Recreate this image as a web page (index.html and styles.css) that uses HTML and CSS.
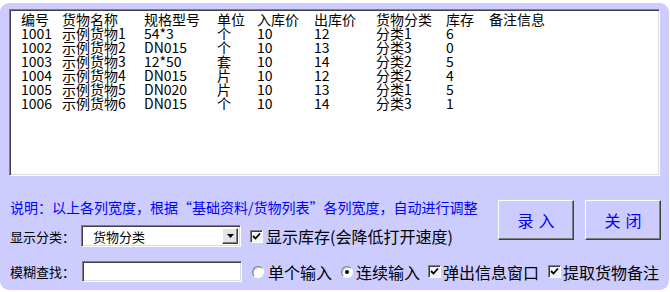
FILE: index.html
```html
<!DOCTYPE html>
<html>
<head>
<meta charset="utf-8">
<link rel="stylesheet" href="styles.css">
</head>
<body>
<div class="panel">
  <div class="list">
    <div class="row"><span>编号</span><span>货物名称</span><span>规格型号</span><span>单位</span><span>入库价</span><span>出库价</span><span>货物分类</span><span>库存</span><span>备注信息</span></div>
    <div class="row"><span>1001</span><span>示例货物1</span><span>54*3</span><span>个</span><span>10</span><span>12</span><span>分类1</span><span>6</span><span></span></div>
    <div class="row"><span>1002</span><span>示例货物2</span><span>DN015</span><span>个</span><span>10</span><span>13</span><span>分类3</span><span>0</span><span></span></div>
    <div class="row"><span>1003</span><span>示例货物3</span><span>12*50</span><span>套</span><span>10</span><span>14</span><span>分类2</span><span>5</span><span></span></div>
    <div class="row"><span>1004</span><span>示例货物4</span><span>DN015</span><span>片</span><span>10</span><span>12</span><span>分类2</span><span>4</span><span></span></div>
    <div class="row"><span>1005</span><span>示例货物5</span><span>DN020</span><span>片</span><span>10</span><span>13</span><span>分类1</span><span>5</span><span></span></div>
    <div class="row"><span>1006</span><span>示例货物6</span><span>DN015</span><span>个</span><span>10</span><span>14</span><span>分类3</span><span>1</span><span></span></div>
  </div>
  <div class="bottom">
    <div class="left">
      <div class="note">说明：以上各列宽度，根据“基础资料/货物列表”各列宽度，自动进行调整</div>
      <div class="line2">
        <span class="lbl">显示分类：</span>
        <div class="select">
          <span class="sel-text">货物分类</span>
          <span class="dd"><svg width="7" height="4" viewBox="0 0 7 4"><path d="M0 0H7L3.5 4Z" fill="#000"/></svg></span>
        </div>
        <span class="opt first"><span class="chk"><svg width="9" height="9" viewBox="0 0 9 9"><path d="M1 4 L3.5 6.5 L8 1.5" stroke="#000" stroke-width="1.8" fill="none"/></svg></span>显示库存(会降低打开速度)</span>
      </div>
    </div>
    <div class="buttons">
      <div class="btn"><span>录</span><span>入</span></div>
      <div class="btn"><span>关</span><span>闭</span></div>
    </div>
  </div>
  <div class="line3">
    <span class="lbl">模糊查找：</span>
    <div class="input"></div>
    <span class="opt r1"><span class="radio"></span>单个输入</span>
    <span class="opt r2"><span class="radio on"></span>连续输入</span>
    <span class="opt c1"><span class="chk"><svg width="9" height="9" viewBox="0 0 9 9"><path d="M1 4 L3.5 6.5 L8 1.5" stroke="#000" stroke-width="1.8" fill="none"/></svg></span>弹出信息窗口</span>
    <span class="opt c2"><span class="chk"><svg width="9" height="9" viewBox="0 0 9 9"><path d="M1 4 L3.5 6.5 L8 1.5" stroke="#000" stroke-width="1.8" fill="none"/></svg></span>提取货物备注</span>
  </div>
</div>
</body>
</html>
```

FILE: styles.css
```css
html, body {
  margin: 0;
  padding: 0;
  background: #ffffff;
}
body {
  font-family: "Noto Sans CJK SC", "Noto Sans", sans-serif;
  color: #000;
}
.panel {
  margin-top: 3px;
  width: 669px;
  height: 287px;
  box-sizing: border-box;
  background: #ccccff;
  border-radius: 9px;
  padding: 6px 9px 0 9px;
}
.list {
  width: 651px;
  height: 167px;
  box-sizing: border-box;
  background: #fff;
  border-top: 1px solid #808080;
  border-left: 1px solid #808080;
  border-right: 1px solid #ffffff;
  border-bottom: 1px solid #ffffff;
  box-shadow: inset 1px 1px 0 #404040, inset -1px -1px 0 #dcdcdc;
  padding: 2px 0 0 11px;
}
.row {
  display: grid;
  grid-template-columns: 41px 82px 73px 40px 57px 62px 70px 43px 1fr;
  height: 14px;
  line-height: 14px;
  font-size: 14px;
  white-space: nowrap;
}
.bottom {
  display: flex;
  justify-content: space-between;
  margin-top: 24px;
}
.left {
  padding-left: 1px;
}
.note {
  color: #0000ff;
  font-size: 14px;
  line-height: 14px;
  height: 14px;
  white-space: nowrap;
}
.line2 {
  display: flex;
  align-items: center;
  margin-top: 11px;
  height: 22px;
}
.lbl {
  font-size: 13px;
  width: 71px;
  white-space: nowrap;
}
.line3 .lbl {
  width: 72px;
}
.select {
  width: 160px;
  height: 22px;
  box-sizing: border-box;
  background: #fff;
  border-top: 1px solid #808080;
  border-left: 1px solid #808080;
  border-right: 1px solid #ffffff;
  border-bottom: 1px solid #ffffff;
  box-shadow: inset 1px 1px 0 #404040, inset -1px -1px 0 #dcdcdc;
  display: flex;
  align-items: center;
  justify-content: space-between;
  padding: 2px 2px 2px 11px;
}
.sel-text {
  font-size: 13px;
}
.dd {
  width: 16px;
  height: 16px;
  box-sizing: border-box;
  background: #e4e4e4;
  border-top: 1px solid #ffffff;
  border-left: 1px solid #ffffff;
  border-right: 1px solid #404040;
  border-bottom: 1px solid #404040;
  box-shadow: inset -1px -1px 0 #808080;
  display: flex;
  align-items: center;
  justify-content: center;
}
.opt {
  display: flex;
  align-items: center;
  font-size: 16px;
  white-space: nowrap;
}
.opt.first {
  margin-left: 9px;
}
.chk {
  width: 13px;
  height: 13px;
  box-sizing: border-box;
  background: #f4f4f4;
  border-top: 1px solid #808080;
  border-left: 1px solid #808080;
  border-right: 1px solid #ffffff;
  border-bottom: 1px solid #ffffff;
  box-shadow: inset 1px 1px 0 #404040;
  display: flex;
  align-items: center;
  justify-content: center;
  margin-right: 3px;
}
.radio {
  width: 12px;
  height: 12px;
  box-sizing: border-box;
  border-radius: 50%;
  background: #fff;
  border: 1px solid;
  border-color: #808080 #ffffff #ffffff #808080;
  box-shadow: inset 1px 1px 0 #c0c0c0;
  margin-right: 3px;
  position: relative;
}
.radio.on::after {
  content: "";
  position: absolute;
  left: 3px;
  top: 3px;
  width: 4px;
  height: 4px;
  border-radius: 50%;
  background: #000;
}
.buttons {
  display: flex;
  gap: 11px;
  margin-right: -1px;
}
.btn {
  width: 76px;
  height: 40px;
  box-sizing: border-box;
  border-top: 1px solid #ffffff;
  border-left: 1px solid #ffffff;
  border-right: 1px solid #404040;
  border-bottom: 1px solid #404040;
  box-shadow: inset -1px -1px 0 #808080;
  color: #0000ff;
  font-size: 16px;
  display: flex;
  align-items: center;
  justify-content: center;
  gap: 5px;
}
.line3 {
  display: flex;
  align-items: center;
  margin-top: 14px;
  padding-left: 1px;
  height: 21px;
}
.input {
  width: 160px;
  height: 21px;
  box-sizing: border-box;
  background: #fff;
  border-top: 1px solid #808080;
  border-left: 1px solid #808080;
  border-right: 1px solid #ffffff;
  border-bottom: 1px solid #ffffff;
  box-shadow: inset 1px 1px 0 #404040, inset -1px -1px 0 #dcdcdc;
}
.opt.r1 { margin-left: 10px; }
.opt.r1 .radio { margin-right: 4px; }
.opt.r2 { margin-left: 9px; }
.opt.c1 { margin-left: 8px; }
.opt.c1 .chk { margin-right: 2px; }
.opt.c2 { margin-left: 9px; }
.opt.c2 .chk { margin-right: 2px; }
```
